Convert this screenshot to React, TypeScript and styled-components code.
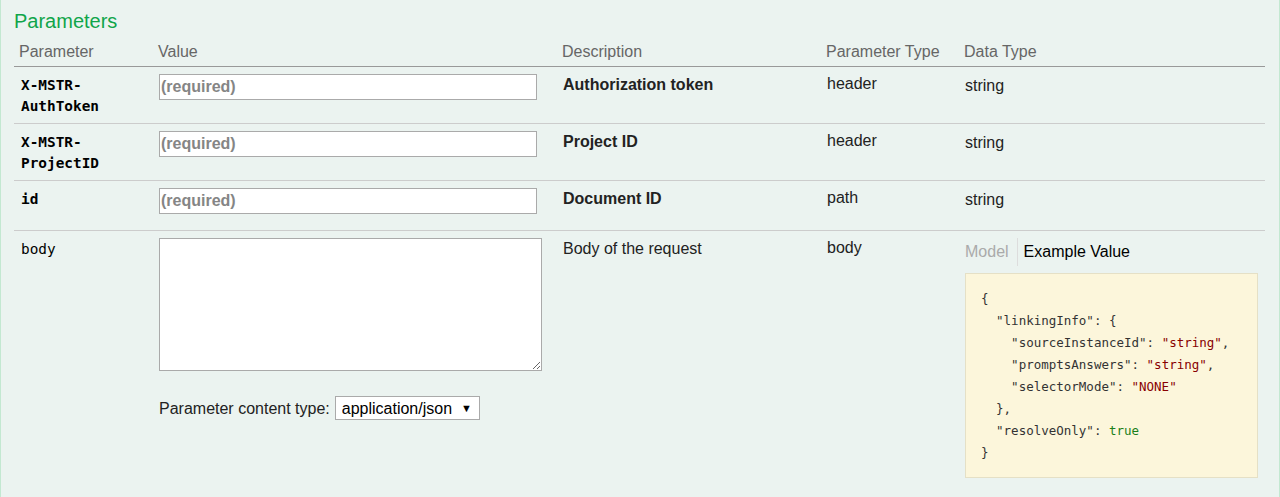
import React from "react";
import styled, { createGlobalStyle } from "styled-components";

const Global = createGlobalStyle`
  html, body { margin: 0; padding: 0; background: #ebf3f0; }
  body { font-family: "Liberation Sans", Arial, sans-serif; color: #222; }
`;

const Content = styled.div`
  box-sizing: border-box;
  width: 1280px;
  min-height: 497px;
  background: #ebf3f0;
  border-left: 1px solid #c3e8d1;
  border-right: 1px solid #c3e8d1;
  padding: 0 14px 0 13px;
`;

const Heading = styled.h4`
  margin: 0;
  padding: 10px 0 5px;
  font-size: 20px;
  line-height: 23px;
  font-weight: normal;
  color: #10a54a;
`;

const COLS = "139px 404px 264px 138px 306px";

const HeadRow = styled.div`
  display: grid;
  grid-template-columns: ${COLS};
  height: 28px;
  border-bottom: 1px solid #999;
`;

const Th = styled.div`
  padding: 5px;
  font-size: 16px;
  line-height: 18px;
  color: #666;
`;

const Row = styled.div<{ $h?: number; $last?: boolean }>`
  display: grid;
  grid-template-columns: ${COLS};
  min-height: ${(p) => (p.$h ? `${p.$h}px` : "auto")};
  border-bottom: ${(p) => (p.$last ? "none" : "1px solid #ccc")};
`;

const Cell = styled.div<{ $pt?: number; $bold?: boolean }>`
  padding: ${(p) => p.$pt ?? 7}px 6px 6px;
  font-size: 16px;
  line-height: 21px;
  font-weight: ${(p) => (p.$bold ? "bold" : "normal")};
  color: #222;
`;

const CodeName = styled.div<{ $bold?: boolean }>`
  padding: 8px 6px 6px 7px;
  font-family: "DejaVu Sans Mono", Consolas, monospace;
  font-size: 14.4px;
  line-height: 21px;
  font-weight: ${(p) => (p.$bold ? "bold" : "normal")};
  color: #000;
`;

const TextInput = styled.input`
  box-sizing: border-box;
  display: block;
  width: 378px;
  height: 26px;
  margin: 0;
  padding: 0 1px;
  border: 1px solid #aaa;
  background: #fff;
  font-family: "Liberation Sans", Arial, sans-serif;
  font-size: 16px;
  font-weight: bold;
  &::placeholder { color: #858585; opacity: 1; }
`;

const BodyArea = styled.textarea`
  box-sizing: border-box;
  display: block;
  width: 383px;
  height: 133px;
  margin: 0;
  border: 1px solid #aaa;
  background: #fff;
  resize: both;
`;

const ContentTypeLine = styled.div`
  display: flex;
  align-items: center;
  gap: 5px;
  margin-top: 25px;
  font-size: 16px;
  color: #222;
`;

const SelectBox = styled.div`
  box-sizing: border-box;
  display: flex;
  align-items: center;
  width: 145px;
  height: 24px;
  border: 1px solid #aaa;
  background: #fff;
  padding: 0 7px 0 6px;
`;

const NativeSelect = styled.select`
  appearance: none;
  -webkit-appearance: none;
  border: none;
  background: transparent;
  padding: 0;
  margin: 0;
  flex: 1;
  font-family: "Liberation Sans", Arial, sans-serif;
  font-size: 16px;
  color: #000;
  outline: none;
`;

const Arrow = styled.span`
  font-size: 11px;
  color: #000;
  line-height: 1;
`;

const Tabs = styled.ul`
  display: flex;
  list-style: none;
  margin: 0;
  padding: 0;
`;

const Tab = styled.li<{ $selected?: boolean; $sep?: boolean }>`
  height: 28px;
  line-height: 28px;
  font-size: 16px;
  padding-right: ${(p) => (p.$sep ? "8px" : "0")};
  margin-left: ${(p) => (p.$sep ? "0" : "6px")};
  border-right: ${(p) => (p.$sep ? "1px solid #ddd" : "none")};
  color: ${(p) => (p.$selected ? "#000" : "#aaa")};
`;

const Sample = styled.pre`
  box-sizing: border-box;
  margin: 7px 0 0 0;
  width: 293px;
  padding: 14px 15px 13px;
  background: #fcf6db;
  border: 1px solid #e5e0c6;
  font-family: "DejaVu Sans Mono", Consolas, monospace;
  font-size: 12.5px;
  line-height: 22px;
  color: #333;
  white-space: pre;
`;

const Str = styled.span`
  color: #880000;
`;

const Lit = styled.span`
  color: #1a7f1a;
`;

type P = { name: string; desc: string; type: string; h: number };

const params: P[] = [
  { name: "X-MSTR-AuthToken", desc: "Authorization token", type: "header", h: 56 },
  { name: "X-MSTR-ProjectID", desc: "Project ID", type: "header", h: 56 },
  { name: "id", desc: "Document ID", type: "path", h: 49 },
];

export default function App() {
  return (
    <>
      <Global />
      <Content>
        <Heading>Parameters</Heading>
        <HeadRow>
          <Th>Parameter</Th>
          <Th>Value</Th>
          <Th>Description</Th>
          <Th>Parameter Type</Th>
          <Th>Data Type</Th>
        </HeadRow>
        {params.map((p) => (
          <Row key={p.name} $h={p.h}>
            <CodeName $bold>{p.name}</CodeName>
            <Cell $pt={7}>
              <TextInput placeholder="(required)" />
            </Cell>
            <Cell $pt={7} $bold>
              {p.desc}
            </Cell>
            <Cell $pt={6}>{p.type}</Cell>
            <Cell $pt={8}>string</Cell>
          </Row>
        ))}
        <Row $last>
          <CodeName>body</CodeName>
          <Cell $pt={7}>
            <BodyArea />
            <ContentTypeLine>
              <span>Parameter content type:</span>
              <SelectBox>
                <NativeSelect defaultValue="application/json">
                  <option value="application/json">application/json</option>
                </NativeSelect>
                <Arrow>▼</Arrow>
              </SelectBox>
            </ContentTypeLine>
          </Cell>
          <Cell $pt={7}>Body of the request</Cell>
          <Cell $pt={6}>body</Cell>
          <Cell $pt={7}>
            <Tabs>
              <Tab $sep>Model</Tab>
              <Tab $selected>Example Value</Tab>
            </Tabs>
            <Sample>
              {"{\n"}
              {'  "linkingInfo": {\n'}
              {'    "sourceInstanceId": '}
              <Str>"string"</Str>
              {",\n"}
              {'    "promptsAnswers": '}
              <Str>"string"</Str>
              {",\n"}
              {'    "selectorMode": '}
              <Str>"NONE"</Str>
              {"\n"}
              {"  },\n"}
              {'  "resolveOnly": '}
              <Lit>true</Lit>
              {"\n}"}
            </Sample>
          </Cell>
        </Row>
      </Content>
    </>
  );
}
